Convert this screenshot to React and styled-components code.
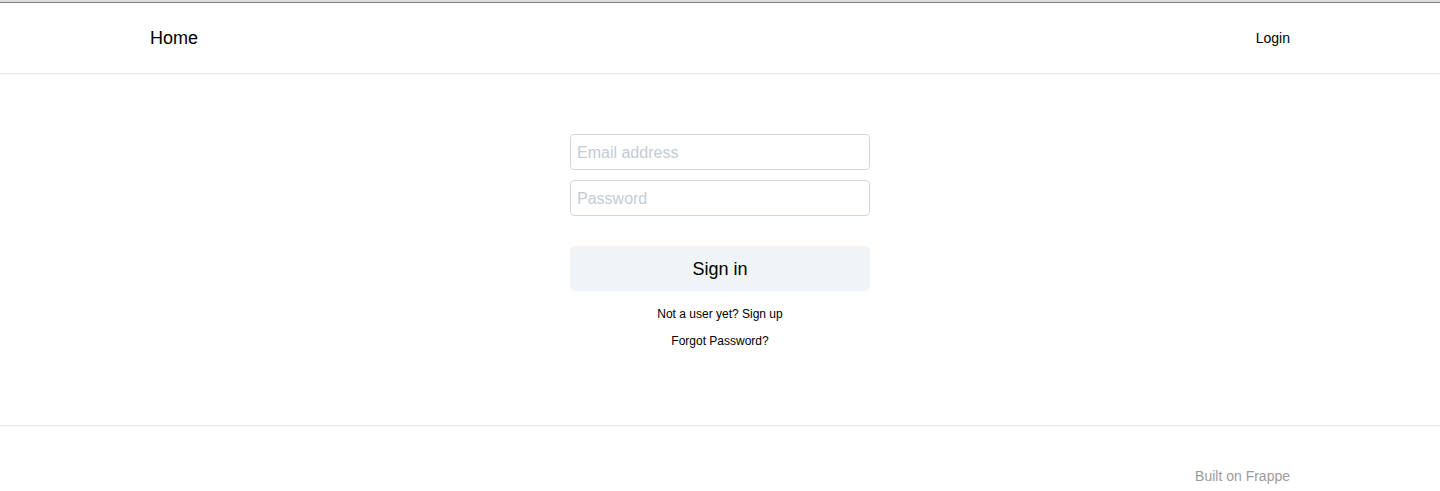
import React from "react";
import styled, { createGlobalStyle } from "styled-components";

const Global = createGlobalStyle`
  html, body { margin: 0; padding: 0; background: #fff; }
  body { font-family: "Liberation Sans", Arial, sans-serif; color: #000; }
  * { box-sizing: border-box; }
`;

const Page = styled.div`
  border-top: 2px solid #dcdcdc;
`;

const Chrome = styled.div`
  height: 1px;
  background: #7d7d7d;
`;

const Header = styled.header`
  height: 71px;
  border-bottom: 1px solid #e4e6e8;
`;

const Container = styled.div`
  width: 1140px;
  margin: 0 auto;
  display: flex;
  align-items: center;
  justify-content: space-between;
  height: 100%;
`;

const Brand = styled.a`
  font-size: 18px;
  color: #000;
  text-decoration: none;
`;

const NavLink = styled.a`
  font-size: 14px;
  color: #000;
  text-decoration: none;
`;

const Main = styled.main`
  display: flex;
  justify-content: center;
  padding-top: 60px;
  height: 352px;
  border-bottom: 1px solid #e4e6e8;
`;

const Form = styled.form`
  width: 300px;
  display: flex;
  flex-direction: column;
`;

const Input = styled.input`
  height: 36px;
  width: 100%;
  border: 1px solid #d1d8dd;
  border-radius: 4px;
  padding: 2px 6px 0;
  font-family: inherit;
  font-size: 16px;
  margin-bottom: ${(p) => p.$mb}px;
  outline: none;
  &::placeholder { color: #c3ccd4; }
`;

const Button = styled.button`
  height: 45px;
  width: 100%;
  border: none;
  border-radius: 5px;
  background: #f0f4f7;
  font-family: inherit;
  font-size: 18px;
  padding: 2px 0 0;
  color: #000;
  cursor: pointer;
`;

const Small = styled.p`
  margin: ${(p) => p.$mt}px 0 0;
  text-align: center;
  font-size: 12px;
  line-height: 14px;
  color: #000;
`;

const Footer = styled.footer`
  height: 65px;
`;

const FooterInner = styled(Container)`
  justify-content: flex-end;
  align-items: flex-end;
  padding-bottom: 7px;
`;

const Built = styled.span`
  font-size: 14px;
  color: #9b9b9b;
`;

export default function App() {
  return (
    <Page>
      <Global />
      <Chrome />
      <Header>
        <Container>
          <Brand href="#">Home</Brand>
          <NavLink href="#">Login</NavLink>
        </Container>
      </Header>
      <Main>
        <Form onSubmit={(e) => e.preventDefault()}>
          <Input $mb={10} type="email" placeholder="Email address" />
          <Input $mb={30} type="password" placeholder="Password" />
          <Button type="submit">Sign in</Button>
          <Small $mt={16}>Not a user yet? Sign up</Small>
          <Small $mt={13}>Forgot Password?</Small>
        </Form>
      </Main>
      <Footer>
        <FooterInner>
          <Built>Built on Frappe</Built>
        </FooterInner>
      </Footer>
    </Page>
  );
}
